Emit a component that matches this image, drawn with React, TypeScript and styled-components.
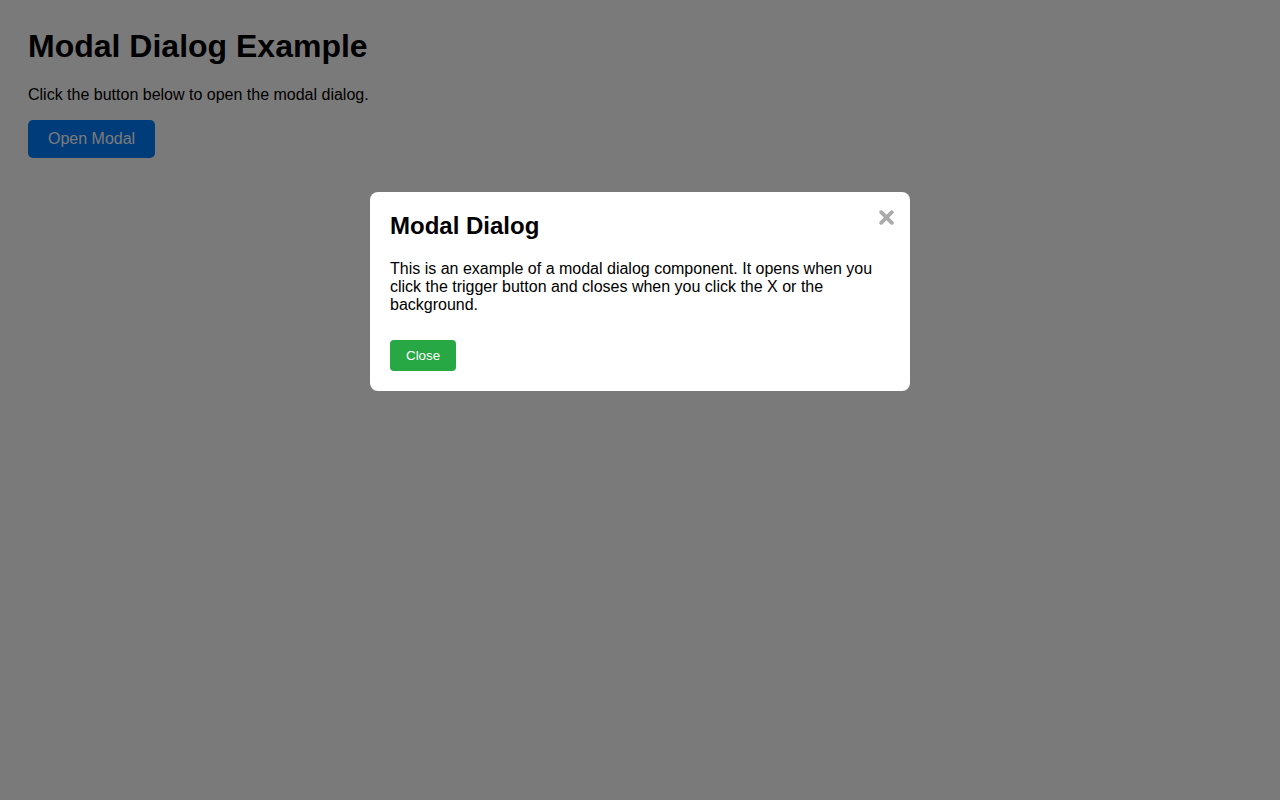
import styled, { createGlobalStyle } from 'styled-components';

const GlobalStyle = createGlobalStyle`
  body {
    margin: 0;
    background: #fff;
    font-family: "Liberation Sans", Arial, sans-serif;
    color: #000;
  }
`;

const Page = styled.div`
  padding: 28px;
`;

const Title = styled.h1`
  font-size: 32px;
  margin: 0 0 0.67em;
`;

const Intro = styled.p`
  font-size: 16px;
  margin: 16px 0;
`;

const Button = styled.button<{ $variant?: 'primary' | 'success' }>`
  border: none;
  color: #fff;
  cursor: pointer;
  font-family: "Liberation Sans", Arial, sans-serif;
  background: ${(p) => (p.$variant === 'success' ? '#28a745' : '#007bff')};
  padding: ${(p) => (p.$variant === 'success' ? '8px 16px' : '10px 20px')};
  font-size: ${(p) => (p.$variant === 'success' ? '13.333px' : '16px')};
  border-radius: ${(p) => (p.$variant === 'success' ? '4px' : '5px')};
`;

const Overlay = styled.div`
  position: fixed;
  inset: 0;
  background: rgba(0, 0, 0, 0.52);
  display: flex;
  justify-content: center;
  align-items: flex-start;
  padding-top: 192px;
`;

const Dialog = styled.div`
  position: relative;
  width: 500px;
  padding: 20px;
  background: #fff;
  border-radius: 8px;
`;

const DialogTitle = styled.h2`
  font-size: 24px;
  margin: 0 0 0.83em;
`;

const DialogText = styled.p`
  font-size: 16px;
  margin: 0 0 16px;
`;

const Actions = styled.div`
  margin-top: 26px;
  display: flex;
`;

const CloseIcon = styled.button`
  position: absolute;
  top: 13px;
  right: 12px;
  width: 24px;
  height: 24px;
  padding: 0;
  border: none;
  background: none;
  color: #aaa;
  cursor: pointer;
  display: flex;
  align-items: center;
  justify-content: center;
`;

export default function App() {
  return (
    <>
      <GlobalStyle />
      <Page>
        <Title>Modal Dialog Example</Title>
        <Intro>Click the button below to open the modal dialog.</Intro>
        <Button $variant="primary">Open Modal</Button>
      </Page>
      <Overlay>
        <Dialog>
          <CloseIcon aria-label="Close dialog">
            <svg width="15" height="15" viewBox="0 0 15 15">
              <path d="M2.2 2.2 L12.8 12.8 M12.8 2.2 L2.2 12.8" stroke="currentColor" strokeWidth="3.8" strokeLinecap="round" />
            </svg>
          </CloseIcon>
          <DialogTitle>Modal Dialog</DialogTitle>
          <DialogText>
            This is an example of a modal dialog component. It opens when you click the trigger
            button and closes when you click the X or the background.
          </DialogText>
          <Actions>
            <Button $variant="success">Close</Button>
          </Actions>
        </Dialog>
      </Overlay>
    </>
  );
}
